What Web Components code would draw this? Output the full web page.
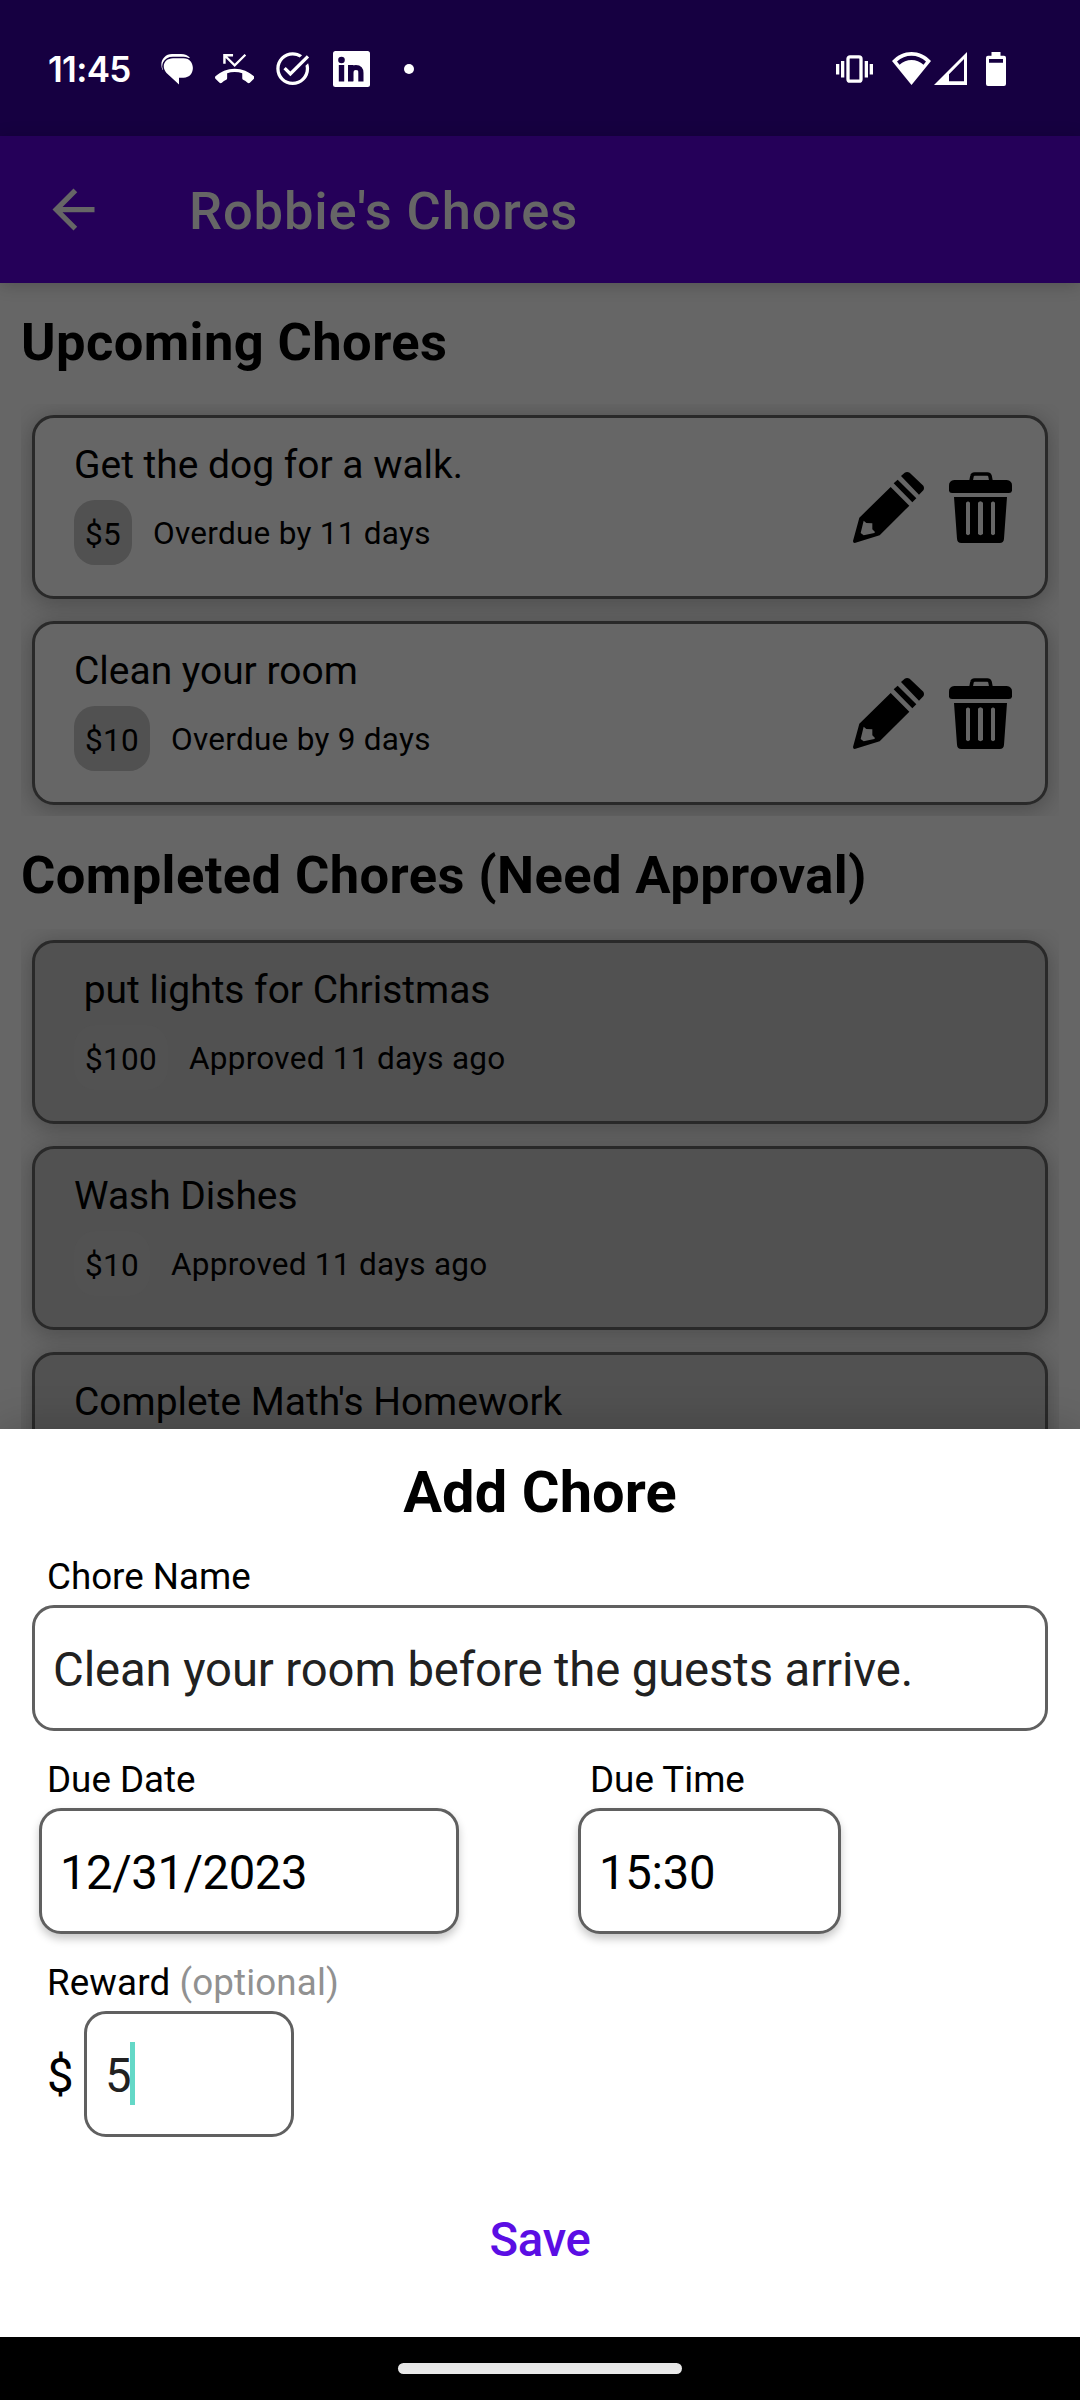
<!DOCTYPE html>
<html lang="en">
<head>
<meta charset="utf-8">
<title>Robbie's Chores</title>
<style>
html,body{margin:0;padding:0;background:#000}
body{font-family:Roboto,"Liberation Sans",sans-serif;color:#000}
</style>
</head>
<body>
<chores-app></chores-app>
<script>
function define(name, html) {
  const template = document.createElement('template');
  template.innerHTML = html;
  customElements.define(name, class extends HTMLElement {
    constructor() {
      super();
      this.attachShadow({ mode: 'open' }).appendChild(template.content.cloneNode(true));
    }
  });
}

define('status-bar', `
<style>
:host{display:flex;justify-content:space-between;height:136px;background:#160041;color:#fff;box-sizing:border-box;padding:0 74px 0 48px;flex:none}
.side{display:flex;align-items:center;height:137px}
time{font:600 35px/40px Inter,sans-serif;width:82px;letter-spacing:-.7px;white-space:nowrap}
svg{display:block;flex:none;fill:#fff}
.msg{margin-left:31px;padding-top:2px}.miss{margin-left:21px}.check{margin-left:19px}.in{margin-left:20px}
.dot{width:10px;height:10px;border-radius:50%;background:#fff;margin-left:34px}
.wifi{margin-left:19px}.sig{margin-left:3px}.bat{margin-left:19px}
</style>
<div class="side">
<time>11:45</time>
<svg class="msg" width="33" height="31" viewBox="0 0 33 31"><path d="M1.500 16C-2 8 3 0 11 0h9c4 0 7 1.500 9 4L12 6z"/><g id="front"><path d="M12 4.300h10.500c12.500 0 12.500 19.400 0 19.400H18V30.500L5.500 19C-.500 12 4 4.300 12 4.300z" stroke="#160041" stroke-width="3"/><path d="M12 4.300h10.500c12.500 0 12.500 19.400 0 19.400H18V30.500L5.500 19C-.500 12 4 4.300 12 4.300z"/></g></svg>
<svg class="miss" width="39.400" height="39.400" viewBox="0 0 24 24"><path d="M6.500 5.500L12 11l7-7-1-1-6 6-4.500-4.500H11V3H5v6h1.500V5.500zm17.210 11.170C20.660 13.780 16.540 12 12 12 7.460 12 3.340 13.780.290 16.670c-.180.180-.290.430-.290.710s.110.530.290.710l2.480 2.480c.180.180.430.290.710.290.270 0 .520-.110.700-.280.790-.740 1.690-1.360 2.660-1.850.330-.160.560-.500.560-.900v-3.100C8.850 14.250 10.400 14 12 14s3.150.250 4.600.720v3.100c0 .390.230.740.560.900.980.490 1.870 1.120 2.670 1.850.180.180.430.280.700.280.280 0 .530-.110.710-.290l2.480-2.480c.180-.180.290-.430.290-.710s-.120-.520-.300-.700z"/></svg>
<svg class="check" width="39.400" height="39.400" viewBox="0 0 24 24"><path d="M22 5.180L10.590 16.600l-4.240-4.240 1.410-1.410 2.830 2.830 10-10L22 5.180zm-2.210 5.040c.130.570.210 1.170.210 1.780 0 4.420-3.580 8-8 8s-8-3.580-8-8 3.580-8 8-8c1.580 0 3.040.460 4.280 1.250l1.440-1.440C16.100 2.670 14.130 2 12 2 6.480 2 2 6.480 2 12s4.480 10 10 10 10-4.480 10-10c0-1.190-.220-2.330-.600-3.390l-1.610 1.610z"/></svg>
<svg class="in" width="37" height="36" viewBox="0 0 37 36"><rect width="37" height="36" rx="2.500"/><g fill="#160041"><circle cx="8.500" cy="9" r="3.300"/><rect x="5.800" y="14" width="5.400" height="16.500"/><rect x="15" y="14" width="5.300" height="16.500"/></g><path d="M17.700 30V22q0-5.500 5.200-5.500t5 5.500v8.500" fill="none" stroke="#160041" stroke-width="5.200"/></svg>
<span class="dot"></span>
</div>
<div class="side">
<svg width="37" height="28" viewBox="0 0 37 28"><rect x="12" y="1.800" width="13" height="24.400" rx="2" fill="none" stroke="#fff" stroke-width="3.300"/><rect y="9" width="3.300" height="10.500"/><rect x="5" y="6" width="3.300" height="16.500"/><rect x="28.700" y="6" width="3.300" height="16.500"/><rect x="33.700" y="9" width="3.300" height="10.500"/></svg>
<svg class="wifi" width="39" height="33" viewBox="0 0 39 33"><path d="M0 9C11-3 28-3 39 9L19.500 33z"/><path d="M5 9.500C13 1.800 26 1.800 34 9.500L31.500 12.800C25 6.500 14 6.500 7.500 12.800z" fill="#160041"/></svg>
<svg class="sig" width="33" height="33" viewBox="0 0 33 33"><path fill-rule="evenodd" d="M0 33L33 0v33zM15 22.300v7h15V7z"/></svg>
<svg class="bat" width="20" height="34" viewBox="0 0 20 34"><path fill-rule="evenodd" d="M5.500 0h9v3.700H18q2 0 2 2V32q0 2-2 2H2q-2 0-2-2V5.700q0-2 2-2h3.500zM3 7v3.700h14V7z"/></svg>
</div>`);

define('app-bar', `
<style>
:host{display:flex;align-items:center;height:147px;background:#250059;color:#666;padding-left:42px;box-sizing:border-box;flex:none;position:relative;z-index:1;box-shadow:0 2px 16px rgba(0,0,0,.2)}
svg{fill:#666;flex:none}
h1{margin:0 0 0 84px;font-size:52.500px;font-weight:500;line-height:62px;padding-top:3px;letter-spacing:.87px}
</style>
<svg width="63" height="63" viewBox="0 0 24 24"><path d="M20 11H7.830l5.590-5.590L12 4l-8 8 8 8 1.410-1.410L7.830 13H20v-2z"/></svg>
<h1><slot></slot></h1>`);

define('section-title', `
<style>
:host{display:block;font-size:52.500px;font-weight:700;line-height:62px;letter-spacing:.4px;padding:28px 21px var(--space,31px);flex:none;white-space:nowrap}
</style><slot></slot>`);

define('chore-list', `
<style>
:host{display:flex;flex-direction:column;gap:22px;margin:0 21px;padding:11px;overflow:hidden;flex:none}
</style><slot></slot>`);

define('chore-actions', `
<style>:host{display:flex;gap:25px;align-items:center}svg{display:block}</style>
<svg width="71" height="71" viewBox="0 0 213 213"><path fill-rule="evenodd" d="M144 12L155 2q7-4 15 0L211 41q4 7 0 14L198 68zM122 34L134 23L190 79L178 91zM113 45L169 101L80 190L5 213Q0 213 0 207L19 137zM32 146L23 183L32 190L64 183L66 180L58 172V154L40 153z"/></svg>
<svg width="63" height="71" viewBox="0 0 189 213"><path d="M66 27L69 12q1-6 8-6h38q6 0 8 6l3 15" fill="none" stroke="#000" stroke-width="11"/><path d="M16 24H173Q189 26 189 40V56Q188 63 180 63H9Q1 63 0 56V40Q0 26 16 24z"/><path fill-rule="evenodd" d="M15 75H174L165 200Q164 213 152 213H37Q25 213 24 200zM51 92v94q6 7 12 0V92q-6-7-12 0zM87 92v94q7 7 15 0V92q-8-9-15 0zM126 92v94q6 7 12 0V92q-6-7-12 0z"/></svg>`);

define('chore-card', `
<style>
:host{display:flex;justify-content:space-between;height:184px;box-sizing:border-box;border:3px solid #292929;border-radius:22px;background:var(--fill,#666);padding:24px 33px 0 39px;box-shadow:0 4px 22px 2px rgba(0,0,0,.24);flex:none}
.title{font-size:38.950px;line-height:46px;white-space:pre}
.row{display:flex;margin-top:12px;font-size:31.500px;line-height:37px;letter-spacing:.28px;white-space:nowrap}
.chip{background:var(--chip,#515151);border-radius:21px;height:65px;box-sizing:border-box;padding:16px 11px 0}
.when{margin-left:21px;padding-top:15px}
.act{padding-top:30px}
</style>
<div><div class="title"><slot name="title"></slot></div>
<div class="row"><div class="chip"><slot name="reward"></slot></div><div class="when"><slot></slot></div></div></div>
<div class="act"><slot name="actions"></slot></div>`);

define('text-field', `
<style>
:host{display:flex;flex-direction:column;gap:6px}
.label{font-size:36.750px;line-height:44px;letter-spacing:var(--label-track,0);white-space:nowrap;padding:1px 0 0 var(--label-inset,0)}
.row{display:flex;align-items:center;font-size:47.250px;line-height:56px}
.box{display:flex;align-items:center;height:126px;box-sizing:border-box;border:3px solid #606060;border-radius:22px;padding:4px 18px 0;width:var(--w);box-shadow:var(--lift,none);color:var(--ink,#000);letter-spacing:var(--track,0);white-space:nowrap;background:#fff}
</style>
<div class="label"><slot name="label"></slot></div>
<div class="row"><slot name="prefix"></slot><div class="box"><slot></slot></div></div>`);

define('text-caret', `<style>:host{display:block;width:5px;height:63px;background:#64d8c7;margin:-5px 0 0 -2px}</style>`);

define('add-chore-sheet', `
<style>
:host{display:flex;flex-direction:column;height:908px;box-sizing:border-box;background:#fff;padding-top:29px;flex:none;position:relative;z-index:2;box-shadow:0 0 40px rgba(0,0,0,.22)}
h2{margin:0 0 28px;text-align:center;font-size:57.750px;line-height:68px;font-weight:700;letter-spacing:.1px}
.name{--w:1016px;--ink:#212121;--label-inset:15px;--track:-.11px;margin-left:32px}
.when{display:flex;margin:26px 0 0 39px;gap:119px;--lift:0 5px 9px rgba(0,0,0,.22)}
.date{--w:420px;--label-inset:8px;--track:-.44px}
.time{--w:263px;--label-inset:12px;--track:-.3px}
.reward{margin:26px 0 0 47px;--w:210px;--ink:#212121;--label-track:.12px}
.opt{color:#919191}
.dollar{width:37px;flex:none;padding-top:4px}
button{all:unset;align-self:center;margin-top:75px;font-size:47.250px;line-height:56px;font-weight:500;letter-spacing:-.3px;color:#5b0ee4}
</style>
<h2>Add Chore</h2>
<text-field class="name"><span slot="label">Chore Name</span>Clean your room before the guests arrive.</text-field>
<div class="when">
<text-field class="date"><span slot="label">Due Date</span>12/31/2023</text-field>
<text-field class="time"><span slot="label">Due Time</span>15:30</text-field>
</div>
<text-field class="reward"><span slot="label">Reward <span class="opt">(optional)</span></span><span slot="prefix" class="dollar">$</span>5<text-caret></text-caret></text-field>
<button>Save</button>`);

define('nav-bar', `
<style>
:host{display:flex;align-items:center;justify-content:center;height:63px;background:#000;flex:none}
i{width:284px;height:11px;border-radius:6px;background:#ebebeb}
</style><i></i>`);

define('chores-app', `
<style>
:host{display:flex;flex-direction:column;width:1080px;height:2400px;overflow:hidden;background:#666}
main{display:flex;flex-direction:column;height:1146px;overflow:hidden;flex:none}
.done{--fill:#515151;--chip:#525252}
</style>
<status-bar></status-bar>
<app-bar>Robbie's Chores</app-bar>
<main>
<section-title>Upcoming Chores</section-title>
<chore-list>
<chore-card><span slot="title">Get the dog for a walk.</span><span slot="reward">$5</span>Overdue by 11 days<chore-actions slot="actions"></chore-actions></chore-card>
<chore-card><span slot="title">Clean your room</span><span slot="reward">$10</span>Overdue by 9 days<chore-actions slot="actions"></chore-actions></chore-card>
</chore-list>
<section-title style="--space:23px">Completed Chores (Need Approval)</section-title>
<chore-list class="done">
<chore-card><span slot="title"> put lights for Christmas</span><span slot="reward">$100</span>Approved 11 days ago</chore-card>
<chore-card><span slot="title">Wash Dishes</span><span slot="reward">$10</span>Approved 11 days ago</chore-card>
<chore-card><span slot="title">Complete Math's Homework</span></chore-card>
</chore-list>
</main>
<add-chore-sheet></add-chore-sheet>
<nav-bar></nav-bar>`);
</script>
</body>
</html>
